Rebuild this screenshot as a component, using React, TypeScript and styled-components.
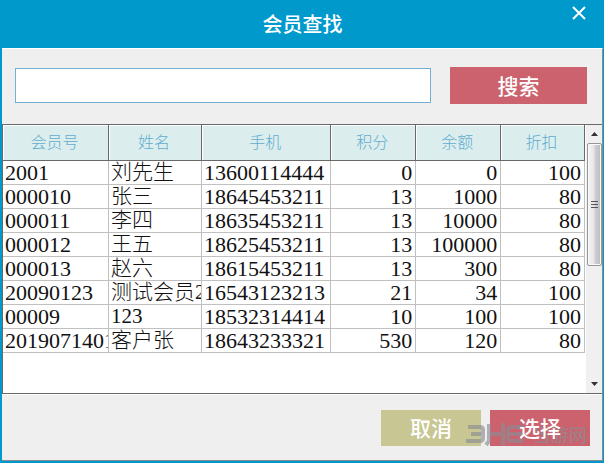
import React from "react";
import styled, { createGlobalStyle } from "styled-components";

const sans = `"Noto Sans CJK SC", sans-serif`;

const GlobalStyle = createGlobalStyle`
  * { box-sizing: border-box; }
  body { margin: 0; background: #0099cc; }
  button, input { font: inherit; border-radius: 0; }
`;

const Dialog = styled.main`
  display: flex;
  flex-direction: column;
  min-height: 100vh;
  padding: 0 1px 2px 2px;
  background: #0099cc;
  font-family: ${sans};
`;

const TitleBar = styled.header`
  display: grid;
  grid-template-columns: 48px 1fr 48px;
  align-items: center;
  height: 48px;
`;

const Title = styled.h1`
  grid-column: 2;
  margin: 0;
  color: #fff;
  font-size: 20px;
  font-weight: 500;
  line-height: 24px;
  text-align: center;
`;

const CloseButton = styled.button`
  align-self: start;
  justify-self: center;
  display: grid;
  place-items: center;
  width: 24px;
  height: 26px;
  padding: 0;
  border: 0;
  background: transparent;
`;

const Panel = styled.div`
  flex: 1;
  display: flex;
  flex-direction: column;
  border: 1px solid #8b8b8b;
  border-top-color: #fff;
  border-left: 0;
  background: #efefef;
`;

const SearchRow = styled.form`
  display: flex;
  align-items: center;
  gap: 19px;
  padding: 18px 15px 20px 13px;
`;

const SearchInput = styled.input`
  flex: 1;
  min-width: 0;
  height: 35px;
  padding: 0 8px;
  border: 1px solid #74b0d2;
  background: #fff;
  font-size: 20px;
`;

const ActionButton = styled.button<{ $tone: "rose" | "olive"; $wide?: boolean }>`
  width: ${(p) => (p.$wide ? 137 : 100)}px;
  height: ${(p) => (p.$wide ? 37 : 36)}px;
  padding: 0 0 2px;
  border: 0;
  background: ${(p) => (p.$tone === "rose" ? "#cb626d" : "#c8c693")};
  color: #fff;
  font-size: 21px;
  font-weight: 500;
  line-height: 24px;
`;

const ButtonLabel = styled.span`
  position: relative;
  z-index: 1;
`;

const GridFrame = styled.section`
  flex: 1;
  display: flex;
  border: 1px solid #696969;
  border-right: 0;
  background: #fff;
`;

const TableArea = styled.div`
  flex: 1;
  min-width: 0;
`;

const Table = styled.table`
  width: 100%;
  table-layout: fixed;
  border-collapse: separate;
  border-spacing: 0;
`;

const Col = styled.col<{ $share: number }>`
  width: ${(p) => p.$share}%;
`;

const HeadCell = styled.th`
  height: 36px;
  padding: 0 2px 4px 0;
  border-right: 1px solid #696969;
  border-bottom: 1px solid #696969;
  background: #dbeeed;
  box-shadow: inset 1px 1px #fff;
  color: #62acd0;
  font-size: 16px;
  font-weight: 300;
  line-height: 24px;
`;

const Cell = styled.td<{ $kind: "code" | "name" | "amount" }>`
  height: 24px;
  padding: 0 3px 0 2px;
  border-right: 1px solid #c0c0c0;
  border-bottom: 1px solid #c0c0c0;
  overflow: hidden;
  color: #111;
  font-family: "Liberation Serif", ${sans};
  font-size: ${(p) => (p.$kind === "name" ? 21 : 22)}px;
  font-weight: 300;
  line-height: 23px;
  white-space: nowrap;
  text-align: ${(p) => (p.$kind === "amount" ? "right" : "left")};
`;

const ScrollBar = styled.div`
  display: flex;
  flex-direction: column;
  align-items: center;
  width: 17px;
  border-left: 1px solid #fff;
  background: #f0f0f0;
`;

const ScrollArrow = styled.button`
  display: grid;
  place-items: center;
  width: 16px;
  height: 18px;
  padding: 0;
  border: 0;
  background: transparent;
`;

const ScrollTrack = styled.div`
  flex: 1;
  width: 15px;
`;

const ScrollThumb = styled.div`
  display: grid;
  place-items: center;
  width: 15px;
  height: 53%;
  border: 1px solid #979797;
  border-radius: 2px;
  background: linear-gradient(90deg, #f5f5f5 0%, #e6e6e8 45%, #cfcfd2 55%, #bcbcc0 100%);
  box-shadow: inset 0 0 0 1px #fafafa;
`;

const Footer = styled.footer`
  position: relative;
  display: flex;
  justify-content: flex-end;
  gap: 9px;
  padding: 15px 12px 14px;
  border-top: 1px solid #fff;
`;

const Watermark = styled.div`
  position: absolute;
  right: 15px;
  bottom: 13px;
  display: flex;
  align-items: center;
  gap: 8px;
  color: #8c8c94;
  opacity: 0.65;
  font-size: 18px;
  font-weight: 500;
  line-height: 26px;
  pointer-events: none;
`;

const columns = [
  { title: "会员号", share: 18.2, kind: "code" },
  { title: "姓名", share: 16, kind: "name" },
  { title: "手机", share: 22.2, kind: "code" },
  { title: "积分", share: 14.6, kind: "amount" },
  { title: "余额", share: 14.6, kind: "amount" },
  { title: "折扣", share: 14.4, kind: "amount" },
] as const;

const members = [
  ["2001", "刘先生", "13600114444", "0", "0", "100"],
  ["000010", "张三", "18645453211", "13", "1000", "80"],
  ["000011", "李四", "18635453211", "13", "10000", "80"],
  ["000012", "王五", "18625453211", "13", "100000", "80"],
  ["000013", "赵六", "18615453211", "13", "300", "80"],
  ["20090123", "测试会员2", "16543123213", "21", "34", "100"],
  ["00009", "123", "18532314414", "10", "100", "100"],
  ["2019071401", "客户张", "18643233321", "530", "120", "80"],
];

export default function App() {
  return (
    <Dialog>
      <GlobalStyle />
      <TitleBar>
        <Title>会员查找</Title>
        <CloseButton type="button" aria-label="关闭">
          <svg width="14" height="14" viewBox="0 0 14 14" stroke="#fff" strokeWidth="2">
            <path d="M1 1 13 13M13 1 1 13" />
          </svg>
        </CloseButton>
      </TitleBar>
      <Panel>
        <SearchRow onSubmit={(e) => e.preventDefault()}>
          <SearchInput type="text" aria-label="会员查找" />
          <ActionButton $tone="rose" $wide type="submit">搜索</ActionButton>
        </SearchRow>
        <GridFrame>
          <TableArea>
            <Table>
              <colgroup>
                {columns.map((c) => <Col key={c.title} $share={c.share} />)}
              </colgroup>
              <thead>
                <tr>{columns.map((c) => <HeadCell key={c.title} scope="col">{c.title}</HeadCell>)}</tr>
              </thead>
              <tbody>
                {members.map((row) => (
                  <tr key={row[0]}>
                    {row.map((value, i) => <Cell key={columns[i].title} $kind={columns[i].kind}>{value}</Cell>)}
                  </tr>
                ))}
              </tbody>
            </Table>
          </TableArea>
          <ScrollBar>
            <ScrollArrow type="button" aria-label="向上滚动">
              <svg width="7" height="4" viewBox="0 0 7 4"><path d="M0 4 3.5 0 7 4Z" fill="#333" /></svg>
            </ScrollArrow>
            <ScrollTrack>
              <ScrollThumb>
                <svg width="7" height="9" viewBox="0 0 7 9" shapeRendering="crispEdges">
                  <path d="M0 1.5h7M0 4.5h7M0 7.5h7" stroke="#555" />
                </svg>
              </ScrollThumb>
            </ScrollTrack>
            <ScrollArrow type="button" aria-label="向下滚动">
              <svg width="7" height="4" viewBox="0 0 7 4"><path d="M0 0 3.5 4 7 0Z" fill="#333" /></svg>
            </ScrollArrow>
          </ScrollBar>
        </GridFrame>
        <Footer>
          <ActionButton $tone="olive" type="button"><ButtonLabel>取消</ButtonLabel></ActionButton>
          <ActionButton $tone="rose" type="button"><ButtonLabel>选择</ButtonLabel></ActionButton>
          <Watermark>
            <svg width="59" height="26" viewBox="0 0 59 26" fill="none" stroke="currentColor" strokeWidth="4">
              <path d="M2 6H14Q17 6 17 9V17Q17 20 14 20H0M5 13H16" />
              <path d="M23 3V20L20 24M24 13H35M37 2V24" />
              <path d="M58 6H46Q42 6 42 10V16Q42 20 46 20H57M43 13H57" />
            </svg>
            当游网
          </Watermark>
        </Footer>
      </Panel>
    </Dialog>
  );
}
